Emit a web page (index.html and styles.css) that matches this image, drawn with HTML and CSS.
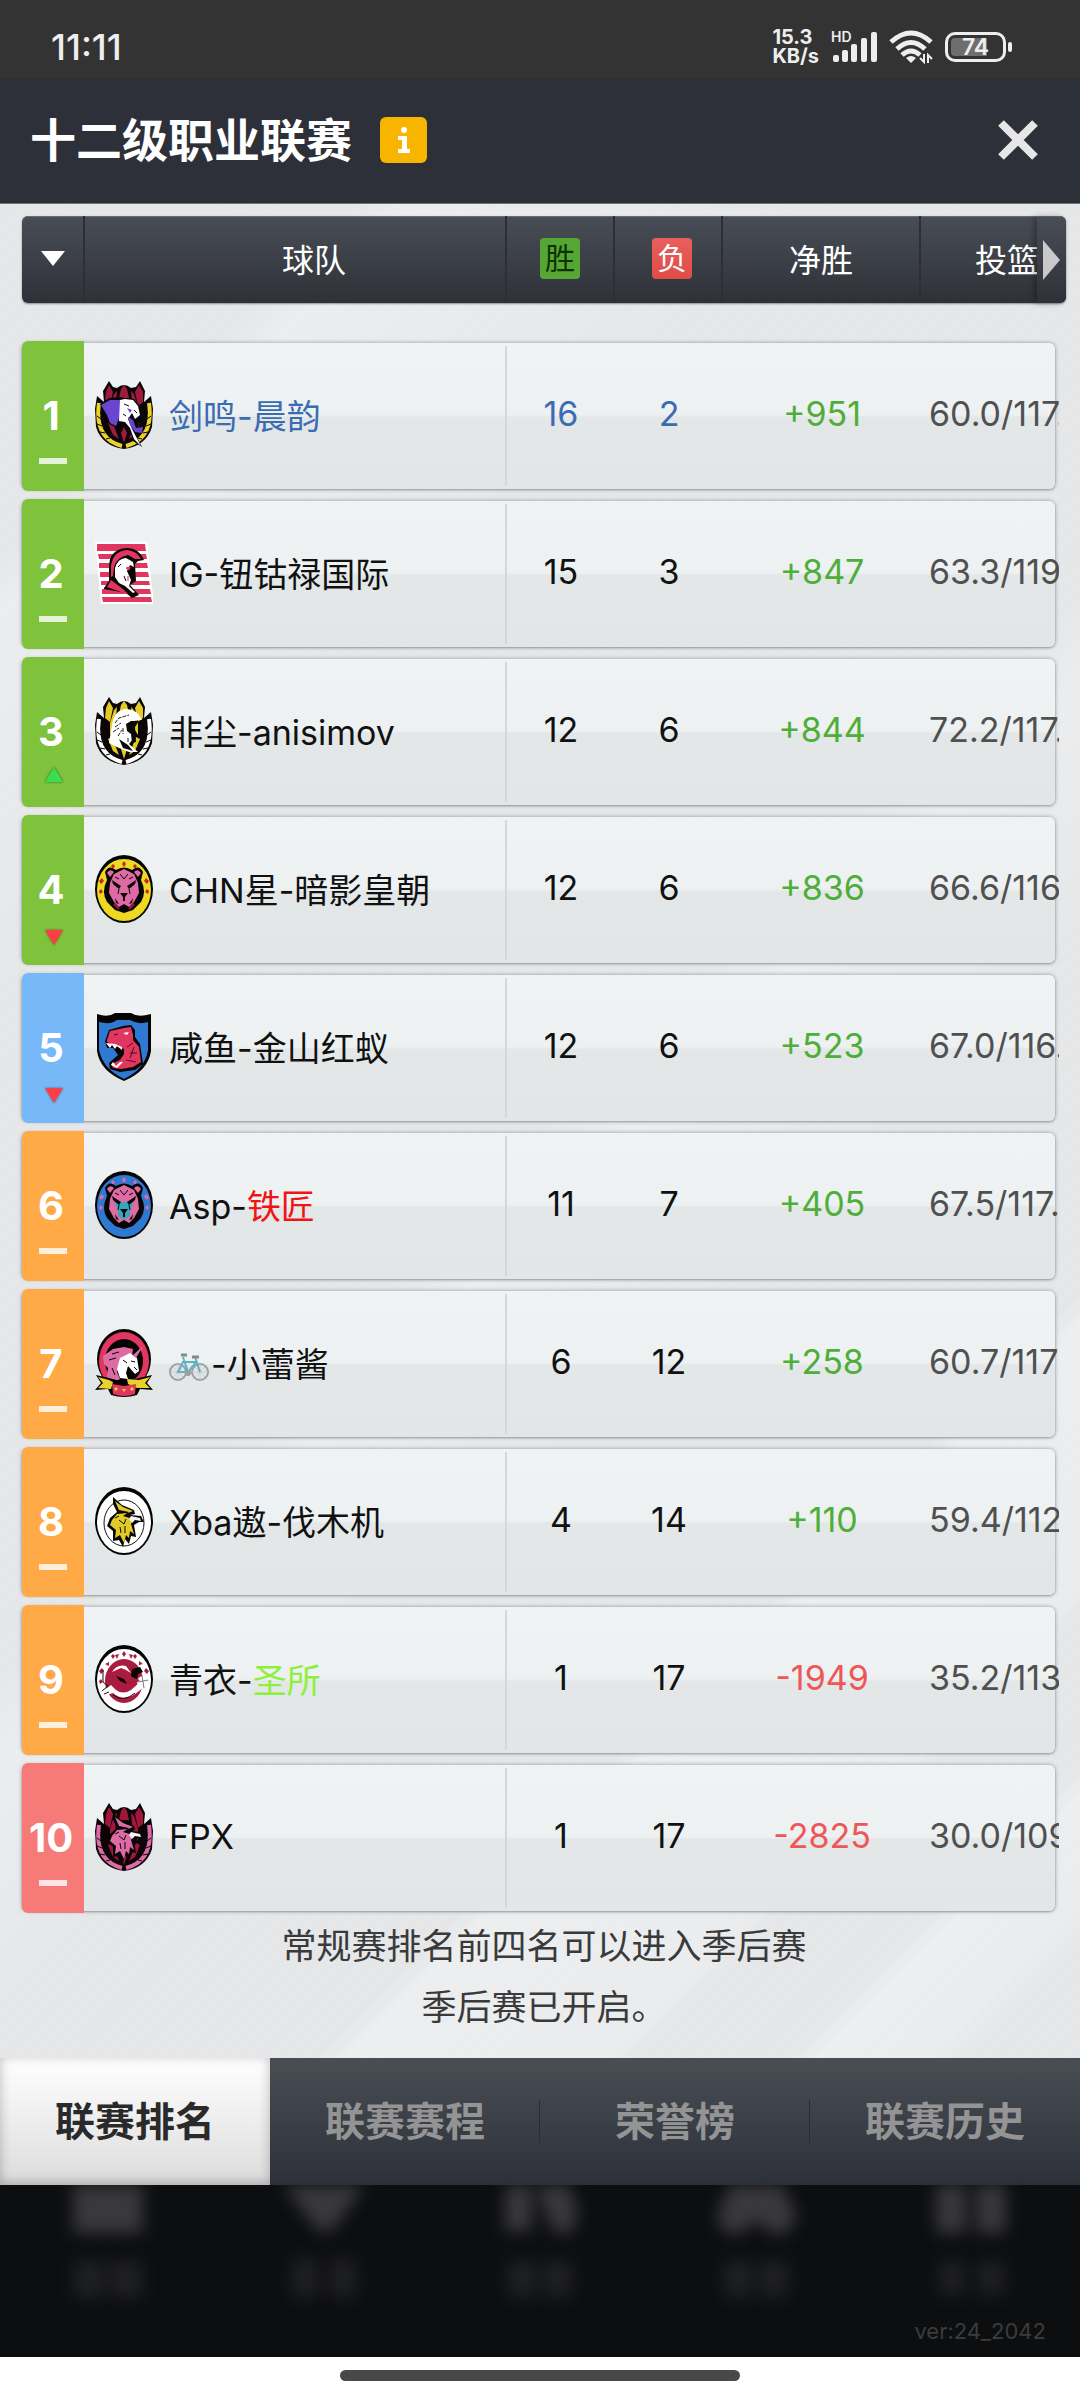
FILE: index.html
```html
<!DOCTYPE html>
<html lang="zh-CN">
<head>
  <meta charset="UTF-8">
  <meta name="viewport" content="width=device-width, initial-scale=1">
  <title>十二级职业联赛</title>
  <link rel="stylesheet" href="styles.css">
</head>
<body>

<!-- shared logo parts -->
<svg class="defs" width="0" height="0" aria-hidden="true">
  <symbol id="crest" viewBox="0 0 58 68">
    <path d="M14 0 18 6 22 7Q29 1 36 7L41 6 45 0 50 10 49 21 56 15 58 28 57 46Q51 65 29 68 7 65 1 46L0 28 2 15 9 21 8 10Z" fill="#0b0508"/>
    <path d="M14 4 18 11 15 25 10 21 11 11ZM44 4 48 11 48 21 43 25 40 11ZM26 8 29 4 32 8 34 17 24 17ZM19 13 22 10 20 30 15 38 15 26ZM39 13 36 10 38 30 43 38 43 26Z" fill="var(--wing)"/>
    <path d="M17 40 24 58 18 54 13 42ZM41 40 34 58 40 54 45 42ZM26 52 29 62 32 52 29 46Z" fill="var(--wing)"/>
    <path d="M4 22Q-1 58 27 65M54 22Q59 58 31 65" fill="none" stroke="var(--leaf)" stroke-width="4"/>
    <path d="M6 30Q5 53 25 61M52 30Q53 53 33 61" fill="none" stroke="#0b0508" stroke-width="1" stroke-dasharray="3 2"/>
    <path d="M2 35 6 38M2 43 7 45M5 51 10 52M11 58 15 57M56 35 52 38M56 43 51 45M53 51 48 52M47 58 43 57" stroke="#0b0508" stroke-width="1"/>
  </symbol>
  <symbol id="disc" viewBox="0 0 58 68">
    <ellipse cx="29" cy="34" rx="29" ry="34" fill="#050505"/>
    <ellipse cx="29" cy="35" rx="27" ry="31" fill="var(--ring)"/>
    <g fill="var(--star)">
      <path d="M29 6 31 9 29 12 27 9ZM18 9 20 11 18 14 16 11ZM40 9 42 11 40 14 38 11Z"/>
      <path d="M7 23 9 26 6 29 4 26ZM51 23 54 26 52 29 49 26ZM6 34 8 37 5 39 4 36ZM52 34 54 36 53 39 50 37Z"/>
    </g>
  </symbol>
  <symbol id="bear" viewBox="0 0 58 68">
    <path d="M10 17Q14 9 21 15 29 10 37 15 44 9 48 17L46 25Q52 37 46 47L38 55 29 58 20 55 12 47Q6 37 12 25Z" fill="#090507"/>
    <path d="M12 18Q15 13 19 17L15 22ZM46 18Q43 13 39 17L43 22Z" fill="var(--fur)"/>
    <path d="M19 19 29 14 39 19 43 28 44 38 39 47 34 52 29 49 24 52 19 47 14 38 15 28Z" fill="var(--fur)"/>
    <path d="M19 28 26 31H32L39 28 37 36 35 38 35 45 29 49 23 45 23 38 21 36Z" fill="var(--face)"/>
    <path d="M17 25 26 31 24 34 18 29ZM41 25 32 31 34 34 40 29ZM25 38H33L30 42V46H28V42ZM20 43 24 49 21 48ZM38 43 34 49 37 48Z" fill="#090507"/>
    <path d="M25 19 29 24 33 19M20 22 24 24M38 22 34 24M24 34 23 39M34 34 35 39" fill="none" stroke="#090507" stroke-width="1"/>
  </symbol>
  <symbol id="griffin" viewBox="0 0 58 68">
    <path d="M18 10 27 18 39 23 40 27 35 28 46 29 49 35 44 35 39 38 41 50 36 49 34 57 30 52 28 60 24 53 18 54 18 44 12 39 15 31 22 25 18 17Z" fill="#080607"/>
    <path d="M20 14 28 20 38 24 33 26 22 27 17 33 15 38 21 43 20 51 25 48 29 56 31 48 34 51 35 44 39 47 36 37 38 32 28 29 34 25 24 23Z" fill="var(--fur)"/>
    <path d="M36 29 45 31 46 34 40 33 37 36 34 32Z" fill="#f2f2f2"/>
    <path d="M24 33 29 37 31 32M25 40 26 46M30 39V46M20 31 24 29" fill="none" stroke="#080607" stroke-width="1"/>
  </symbol>
</svg>

<div class="status-bar">
  <span class="clock">11:11</span>
  <div class="status-icons">
    <div class="net-speed"><span>15.3</span><span>KB/s</span></div>
    <div class="signal">
      <span class="hd">HD</span>
      <svg width="46" height="30" viewBox="0 0 46 30" fill="#eee">
        <rect x="2" y="23" width="6" height="7" rx="2"/>
        <rect x="11" y="18" width="6" height="12" rx="2"/>
        <rect x="20" y="12" width="6" height="18" rx="2"/>
        <rect x="30" y="6" width="6" height="24" rx="2"/>
        <rect x="40" y="0" width="6" height="30" rx="2"/>
      </svg>
    </div>
    <svg width="44" height="34" viewBox="0 0 44 34" fill="none" stroke="#eee" stroke-width="5">
      <path d="M2 12Q22-6 42 12M8 19Q22 6 36 19"/>
      <path d="M13 25Q22 17 31 25"/>
      <path d="M17 28Q22 24 27 28L22 33Z" fill="#eee" stroke="none"/>
      <path d="M35 24V32L31 28M39 33V25L43 29" stroke-width="2"/>
    </svg>
    <div class="battery">74</div>
  </div>
</div>

<header class="title-bar">
  <h1>十二级职业联赛</h1>
  <button class="info-btn" type="button" aria-label="说明">
    <svg width="16" height="28" viewBox="0 0 16 28" fill="#fff">
      <circle cx="8" cy="4" r="3"/>
      <path d="M2 10H11V23H14V27H2V23H6V14H2Z"/>
    </svg>
  </button>
  <button class="close-btn" type="button" aria-label="关闭">
    <svg width="40" height="40" viewBox="0 0 40 40" stroke="#e6e6e6" stroke-width="8"><path d="M3 3 37 37M37 3 3 37"/></svg>
  </button>
</header>

<main>
  <table class="standings">
    <thead>
      <tr>
        <th><button class="sort-btn" type="button" aria-label="排序"></button></th>
        <th class="team-head">球队</th>
        <th><span class="tag tag-win">胜</span></th>
        <th class="loss-head"><span class="tag tag-loss">负</span></th>
        <th>净胜</th>
        <th class="shot-head">投篮<button class="more-btn" type="button" aria-label="更多"></button></th>
      </tr>
    </thead>
    <tbody>
      <tr class="mine">
        <td class="rank green">1<i class="same"></i></td>
        <td class="team">
          <svg class="logo elephant" viewBox="0 0 58 68">
            <use href="#crest"/>
            <path d="M5 23 14 17 25 16 30 17 39 18 44 24 47 33 45 40 43 46 46 54 41 54 47 66 38 60 35 48 29 42 22 47 14 43 10 34Z" fill="#09070a"/>
            <path d="M6 24 15 19 26 19 25 35 21 45 15 42 12 34Z" fill="#6a45cf"/>
            <path d="M25 19 30 18 38 19 43 25 45 34 40 38 37 32 33 38 37 48 46 65 39 58 35 47 30 41 24 40Z" fill="#fff"/>
            <path d="M33 36 38 39 41 47 48 46 47 52 40 51 35 44ZM32 27 37 29 35 32Z" fill="#6a45cf"/>
            <path d="M29 23 34 25M39 29 42 32M28 33 31 35" stroke="#09070a" stroke-width="1"/>
          </svg>
          <span>剑鸣-晨韵</span>
        </td>
        <td>16</td>
        <td>2</td>
        <td class="plus">+951</td>
        <td class="shot">60.0/117.</td>
      </tr>
      <tr>
        <td class="rank green">2<i class="same"></i></td>
        <td class="team">
          <svg class="logo" viewBox="0 0 58 68">
            <path d="M0 3H52L59 65H6Z" fill="#fff"/>
            <path d="M2 5H50L51 12H2ZM3 15H51L52 20H4ZM4 24H52L53 29H4ZM5 33H53L54 38H5ZM6 42H54L55 46H6ZM7 50H55L56 55H7ZM7 58H56L57 63H8Z" fill="#e0365f"/>
            <path d="M9 49 14 42V28Q14 10 32 9 44 9 49 21L43 22 40 25 41 42 35 46 44 56 37 59 31 54 9 50Z" fill="#0a0506"/>
            <path d="M12 48 16 41 28 50 34 56 23 52ZM16 38V27Q18 12 32 11 42 12 46 20L40 20 33 16Q22 18 19 28L18 37Z" fill="#e0365f"/>
            <path d="M20 38V29Q23 19 31 19L38 23 39 28 35 26 32 32 36 41 34 47 40 53 38 54 30 47 24 44Z" fill="#fff"/>
            <path d="M31 29 35 28 34 31ZM33 37V42" stroke="#e0365f" fill="#e0365f"/>
            <path d="M23 28 26 25M29 37 31 42" stroke="#0a0506" stroke-width="1"/>
          </svg>
          <span>IG-钮钴禄国际</span>
        </td>
        <td>15</td>
        <td>3</td>
        <td class="plus">+847</td>
        <td class="shot">63.3/119.</td>
      </tr>
      <tr>
        <td class="rank green">3<i class="up"></i></td>
        <td class="team">
          <svg class="logo spartan" viewBox="0 0 58 68">
            <use href="#crest"/>
            <path d="M14 46 17 28Q19 13 31 12 42 12 47 23L40 23 38 31 38 42 34 47 43 55 34 55 24 51Z" fill="#fff"/>
            <path d="M36 24 44 24 40 30 41 45 37 46 36 37 32 34 31 27ZM24 42 33 48 38 54 28 51Z" fill="#090907"/>
            <path d="M20 26 24 21 34 18M20 30 26 26M18 35 24 31M23 39 27 33M28 31V37M33 41V45" fill="none" stroke="#222" stroke-width="1" stroke-dasharray="4 1"/>
          </svg>
          <span>非尘-anisimov</span>
        </td>
        <td>12</td>
        <td>6</td>
        <td class="plus">+844</td>
        <td class="shot">72.2/117.</td>
      </tr>
      <tr>
        <td class="rank green">4<i class="down"></i></td>
        <td class="team">
          <svg class="logo bear-gold" viewBox="0 0 58 68">
            <use href="#disc"/><use href="#bear"/>
            <path d="M19 49 24 54M39 49 34 54" stroke="#a3163b" stroke-width="2"/>
          </svg>
          <span>CHN星-暗影皇朝</span>
        </td>
        <td>12</td>
        <td>6</td>
        <td class="plus">+836</td>
        <td class="shot">66.6/116.</td>
      </tr>
      <tr>
        <td class="rank blue">5<i class="down"></i></td>
        <td class="team">
          <svg class="logo" viewBox="0 0 58 68">
            <path d="M2 1Q13 5 20 0H36Q43 5 56 1V38Q53 58 29 68 5 58 2 38Z" fill="#040404"/>
            <path d="M4 9Q16 12 22 7H35Q43 12 53 9V37Q50 56 29 66 8 56 4 37Z" fill="#2f79d2"/>
            <path d="M10 28 14 17 28 13 36 12 40 17V24L45 31 48 51 40 57 25 59 15 56 14 50 23 42 18 35 12 35Z" fill="#070607"/>
            <path d="M12 27 15 18 29 15 36 14 38 22 38 27 44 34 46 49 38 54 26 56 18 55 16 51 25 47 29 41 29 36 20 33 12 29Z" fill="#e0365f"/>
            <path d="M11 30 15 35 17 32 20 36 22 33 27 37 27 34 20 31ZM16 52 22 55 28 49 25 49 21 53 18 49ZM28 20 34 19 32 22Z" fill="#fff"/>
            <path d="M32 34 38 30M35 40 42 40M31 47 41 49M39 34 35 45M19 22 23 21" stroke="#4b0c1d" stroke-width="1"/>
          </svg>
          <span>咸鱼-金山红蚁</span>
        </td>
        <td>12</td>
        <td>6</td>
        <td class="plus">+523</td>
        <td class="shot">67.0/116.</td>
      </tr>
      <tr>
        <td class="rank orange">6<i class="same"></i></td>
        <td class="team">
          <svg class="logo bear-blue" viewBox="0 0 58 68">
            <use href="#disc"/><use href="#bear"/>
          </svg>
          <span>Asp-<b class="red">铁匠</b></span>
        </td>
        <td>11</td>
        <td>7</td>
        <td class="plus">+405</td>
        <td class="shot">67.5/117.</td>
      </tr>
      <tr>
        <td class="rank orange">7<i class="same"></i></td>
        <td class="team">
          <svg class="logo" viewBox="0 0 58 68">
            <ellipse cx="29" cy="30" rx="27" ry="30" fill="#050304"/>
            <ellipse cx="29" cy="32" rx="25" ry="29" fill="#e0365f"/>
            <ellipse cx="29" cy="32" rx="19" ry="22" fill="#050304"/>
            <path d="M8 27 18 20 29 18 38 20 37 27 25 32 22 43 25 50 18 54 12 48 13 39 9 35Z" fill="#df6ba5"/>
            <path d="M25 29 35 24 42 29 44 42 40 45 33 37 31 44 33 50 25 49 22 40Z" fill="#fff"/>
            <path d="M38 26 48 17 41 29Z" fill="#df6ba5"/>
            <path d="M28 31 32 34M36 32 40 33M17 25 24 23M14 31 21 29M17 39 20 46M39 38 42 41" stroke="#050304" stroke-width="1"/>
            <path d="M1 46 14 49 29 53 44 49 57 46 52 54 58 61 45 60 42 66Q29 70 16 66L13 60 0 61 6 54Z" fill="#050304"/>
            <path d="M3 48 14 51 18 53 16 60 3 59 8 54ZM55 48 44 51 32 50 33 55 42 59 55 59 50 54Z" fill="#ead22c"/>
            <path d="M17 55 29 57 41 55 40 65Q29 69 18 65Z" fill="#e0365f"/>
            <path d="M21 58 23 60 21 62 19 60ZM27 60H31L29 63ZM37 58 39 60 37 62 35 60Z" fill="#ead22c"/>
          </svg>
          <span><svg class="bike" viewBox="0 0 40 30" role="img" aria-label="自行车">
            <g fill="none">
              <circle cx="9" cy="20" r="8" stroke="#9b9fa1" stroke-width="2"/>
              <circle cx="31" cy="20" r="8" stroke="#9b9fa1" stroke-width="2"/>
              <path d="M9 12V28M1 20H17M4 15 14 25M14 15 4 25M31 12V28M23 20H39M26 15 36 25M36 15 26 25" stroke="#c8cccd" stroke-width="1"/>
              <path d="M9 20 14 10H27L19 20ZM31 20 26 5M19 20 14 5" stroke="#5cb3c1" stroke-width="2"/>
              <path d="M12 3H18M23 5H30" stroke="#85898b" stroke-width="3"/>
              <circle cx="19" cy="21" r="3" fill="#9b9fa1"/>
            </g>
          </svg>-小蕾酱</span>
        </td>
        <td>6</td>
        <td>12</td>
        <td class="plus">+258</td>
        <td class="shot">60.7/117</td>
      </tr>
      <tr>
        <td class="rank orange">8<i class="same"></i></td>
        <td class="team">
          <svg class="logo griffin-gold" viewBox="0 0 58 68">
            <use href="#disc"/>
            <ellipse cx="29" cy="36" rx="20" ry="23" fill="none" stroke="#111" stroke-width="1"/>
            <use href="#griffin"/>
          </svg>
          <span>Xba遨-伐木机</span>
        </td>
        <td>4</td>
        <td>14</td>
        <td class="plus">+110</td>
        <td class="shot">59.4/112.</td>
      </tr>
      <tr>
        <td class="rank orange">9<i class="same"></i></td>
        <td class="team">
          <svg class="logo ring-white" viewBox="0 0 58 68">
            <use href="#disc"/>
            <path d="M10 19 14 17 14 21ZM20 10 24 9 22 14ZM34 9 38 10 36 14ZM44 16 48 19 44 20Z" fill="#a91c40"/>
            <ellipse cx="29" cy="36" rx="19" ry="22" fill="#a91c40"/>
            <path d="M8 46 16 40 21 45Q28 50 36 45L44 38 48 43 40 49Q28 57 18 48L8 51Z" fill="#fff"/>
            <path d="M8 25V37L13 41 7 46M14 47 9 49M18 50Q28 58 40 48" fill="none" stroke="#111" stroke-width="1"/>
            <path d="M17 27Q22 19 31 21L36 28 31 25 26 23Z" fill="#fff"/>
            <path d="M37 24 45 22 48 27 43 29 42 35 36 31ZM21 31 29 34 32 39 25 36Z" fill="#060405"/>
            <circle cx="48" cy="37" r="6" fill="#fff"/>
            <path d="M43 37 53 35M47 31 49 43" stroke="#777" stroke-width="1"/>
            <path d="M36 32 45 35 41 38 36 36Z" fill="#a91c40"/>
          </svg>
          <span>青衣-<b class="lime">圣所</b></span>
        </td>
        <td>1</td>
        <td>17</td>
        <td class="minus">-1949</td>
        <td class="shot">35.2/113</td>
      </tr>
      <tr>
        <td class="rank pink">10<i class="same"></i></td>
        <td class="team">
          <svg class="logo griffin-rose" viewBox="0 0 58 68">
            <use href="#crest"/><use href="#griffin"/>
          </svg>
          <span>FPX</span>
        </td>
        <td>1</td>
        <td>17</td>
        <td class="minus">-2825</td>
        <td class="shot">30.0/109</td>
      </tr>
    </tbody>
  </table>

  <div class="notes">
    <p>常规赛排名前四名可以进入季后赛</p>
    <p>季后赛已开启。</p>
  </div>
</main>

<nav class="tabs">
  <button class="tab active" type="button">联赛排名</button>
  <button class="tab" type="button">联赛赛程</button>
  <button class="tab" type="button">荣誉榜</button>
  <button class="tab" type="button">联赛历史</button>
</nav>

<!-- dimmed menu of the screen below -->
<footer class="under">
  <div class="under-menu" aria-hidden="true">
    <svg viewBox="0 0 100 130"><path d="M15-10H85V48H15Z"/><path class="dim" d="M16 76H46V112H16ZM52 76H84V112H52Z"/></svg>
    <svg viewBox="0 0 100 130"><path d="M12-10H88V4L58 46H44L12 4Z"/><path class="dim" d="M18 74H44V112H18ZM56 74H82V112H56Z"/></svg>
    <svg viewBox="0 0 100 130"><path d="M16-10H42V46H14ZM46-10H76L88 26 82 48H64L52 20Z"/><path class="dim" d="M18 76H46V112H18ZM54 76H82V112H54Z"/></svg>
    <svg viewBox="0 0 100 130"><path d="M28-10H72L90 28Q88 50 68 50L50 36 32 50Q10 48 12 28Z"/><path class="dim" d="M18 76H46V112H18ZM54 76H82V112H54Z"/></svg>
    <svg viewBox="0 0 100 130"><path d="M14-10H44V48H14ZM54-10H84V48H54Z"/><path class="dim" d="M18 76H42V110H18ZM56 76H82V110H56Z"/></svg>
  </div>
  <p class="version">ver:24_2042</p>
</footer>
<div class="home-bar"><span></span></div>

</body>
</html>
```
FILE: styles.css
```css
* {
  box-sizing: border-box;
}
body {
  margin: 0;
  background: #fff;
  font-family: Inter, "Noto Sans CJK SC", sans-serif;
  font-size: 34px;
  color: #111;
}
button {
  border: none;
  padding: 0;
  background: none;
  font-family: inherit;
  cursor: pointer;
}
svg {
  display: block;
}
.defs {
  position: absolute;
}

/* status bar */
.status-bar {
  height: 78px;
  padding: 16px 74px 0 51px;
  display: flex;
  justify-content: space-between;
  align-items: center;
  background: #333;
  color: #eee;
}
.clock {
  font-size: 36px;
  font-weight: 500;
}
.status-icons {
  display: flex;
  align-items: center;
  gap: 12px;
}
.net-speed {
  display: flex;
  flex-direction: column;
  font-size: 20px;
  line-height: 19px;
  font-weight: 700;
}
.signal {
  position: relative;
}
.hd {
  position: absolute;
  left: 0;
  top: -2px;
  font-size: 14px;
  line-height: 14px;
  font-weight: 600;
}
.battery {
  position: relative;
  width: 61px;
  height: 30px;
  border: 3px solid #eee;
  border-radius: 10px;
  background: linear-gradient(90deg, #6e6e6e 74%, #333 74%) content-box;
  padding: 3px;
  font-size: 23px;
  line-height: 18px;
  font-weight: 600;
  text-align: center;
}
.battery::after {
  content: "";
  position: absolute;
  right: -9px;
  top: 7px;
  width: 4px;
  height: 10px;
  border-radius: 2px;
  background: #eee;
}

/* title */
.title-bar {
  height: 126px;
  padding: 0 42px 2px 30px;
  display: flex;
  align-items: center;
  background: #2d3038;
  border-bottom: 1px solid #6c7078;
}
.title-bar h1 {
  margin: 0;
  font-size: 46px;
  line-height: 60px;
  font-weight: 700;
  color: #fff;
}
.info-btn {
  width: 47px;
  height: 46px;
  margin-left: 28px;
  display: grid;
  place-items: center;
  border-radius: 6px;
  background: #f8b500;
}
.close-btn {
  margin-left: auto;
}

/* standings */
main {
  padding: 12px 14px 20px 22px;
  background:
    linear-gradient(135deg, transparent 12%, rgba(255,255,255,.25) 14%, transparent 28%, transparent 50%, rgba(255,255,255,.25) 53%, transparent 62%, transparent 74%, rgba(255,255,255,.3) 75%, rgba(255,255,255,.2) 84%, transparent 85%, transparent 90%, rgba(255,255,255,.3) 91%, rgba(255,255,255,.2) 95%, transparent 96%),
    repeating-linear-gradient(135deg, #e5e7e9 0, #e5e7e9 11px, #e2e4e6 12px, #e5e7e9 13px);
}
.standings,
.standings thead,
.standings tbody {
  display: block;
}
.standings tr {
  display: grid;
  grid-template-columns: 62px minmax(0, 1fr) 108px 108px 198px 134px;
}
.standings thead tr {
  grid-template-columns: 63px minmax(0, 1fr) 108px 108px 198px 145px;
  height: 87px;
  margin-bottom: 40px;
  border-radius: 6px;
  background: linear-gradient(#494d55, #2e3138);
  box-shadow: inset 0 1px 0 #686e75, 0 1px 2px rgba(0,0,0,.4);
}
.standings th {
  display: flex;
  align-items: center;
  justify-content: center;
  padding: 0 0 3px;
  font-size: 32px;
  font-weight: 400;
  color: #fff;
  border-right: 2px solid #2c2f35;
}
.standings .team-head {
  padding-left: 38px;
}
.standings .loss-head {
  padding-left: 8px;
}
.standings .shot-head {
  position: relative;
  justify-content: flex-start;
  padding-left: 54px;
  border-right: none;
}
.sort-btn {
  border: 12px solid transparent;
  border-top: 15px solid #fff;
  border-bottom: none;
}
.more-btn {
  position: absolute;
  right: 0;
  top: 1px;
  bottom: 0;
  width: 29px;
  border-radius: 0 6px 6px 0;
  background: linear-gradient(#494d55, #2e3138);
  box-shadow: -3px 0 6px rgba(0,0,0,.3);
}
.more-btn::before {
  content: "";
  display: block;
  margin-left: 6px;
  border: 20px solid transparent;
  border-left: 17px solid #c9c9c9;
  border-right: none;
}
.tag {
  width: 40px;
  height: 41px;
  border-radius: 4px;
  font-size: 30px;
  line-height: 41px;
  text-align: center;
}
.tag-win {
  background: #54a735;
  color: #0e3300;
}
.tag-loss {
  background: linear-gradient(#e95f5b, #de4d49);
}

.standings tbody {
  padding-right: 11px;
}
.standings tbody tr {
  height: 146px;
  margin-bottom: 12px;
  border-radius: 6px;
  background: linear-gradient(#eff3f4, #edf1f2 49%, #e3e7e8 51%, #e2e6e7);
  box-shadow: 0 0 4px rgba(0,0,0,.35), 0 1px 2px rgba(0,0,0,.2);
}
.standings tbody tr:last-child {
  margin-bottom: 5px;
}
.standings td {
  display: flex;
  align-items: center;
  justify-content: center;
  padding: 0 0 6px;
}
.standings .rank {
  flex-direction: column;
  justify-content: flex-start;
  margin: -2px 0;
  padding: 50px 4px 0 0;
  border-radius: 6px 0 0 6px;
  font-size: 40px;
  line-height: 50px;
  font-weight: 700;
  color: #fff;
}
.green {
  background: #7fc23b;
}
.blue {
  background: #76b8f8;
}
.orange {
  background: #ffa947;
}
.pink {
  background: #f67b78;
}
.same {
  width: 28px;
  height: 6px;
  margin: 17px 0 0 3px;
  background: rgba(255,255,255,.8);
}
.up,
.down {
  margin: 10px 0 0 5px;
  border: 9px solid transparent;
  border-bottom: 15px solid #3edc50;
  border-top: none;
  filter: drop-shadow(0 0 1px rgba(0,60,0,.7));
}
.down {
  margin-top: 15px;
  border-top: 15px solid #fc3f45;
  border-bottom: none;
  filter: drop-shadow(0 0 1px rgba(60,0,0,.5));
}
.standings .team {
  justify-content: flex-start;
  gap: 16px;
  padding: 0 0 3px 11px;
  margin: 3px 0;
  border-right: 2px solid #d5d8da;
  white-space: nowrap;
}
.team b {
  font-weight: 400;
}
.red {
  color: #f01414;
}
.lime {
  color: #8df03c;
}
.mine {
  color: #3b6cb2;
}
.plus {
  color: #4fae39;
}
.minus {
  color: #ee5757;
}
.standings .shot {
  justify-content: flex-start;
  margin-right: -4px;
  padding-left: 8px;
  overflow: hidden;
  color: #505050;
}
.logo {
  flex: none;
  width: 58px;
  height: 68px;
}
.bike {
  display: inline-block;
  width: 40px;
  height: 30px;
  margin-right: 2px;
  vertical-align: -5px;
}
.elephant {
  --wing: #9d1b3f;
  --leaf: #ead22c;
}
.spartan {
  --wing: #e3cb27;
  --leaf: #fff;
}
.griffin-rose {
  --wing: #a3163b;
  --leaf: #df6ba5;
  --fur: #df6ba5;
}
.griffin-gold {
  --ring: #fff;
  --star: #fff;
  --fur: #e3cb27;
}
.bear-gold {
  --ring: #eed922;
  --star: #c2272f;
  --fur: #df6ba5;
  --face: #df6ba5;
}
.bear-blue {
  --ring: #2f79d2;
  --star: #df6ba5;
  --fur: #df6ba5;
  --face: #36a6bd;
}
.ring-white {
  --ring: #fff;
  --star: #a91c40;
}

.notes {
  margin-top: 4px;
  text-align: center;
  font-size: 35px;
  line-height: 61px;
  color: #3a3a3a;
}
.notes p {
  margin: 0;
}

/* tabs */
.tabs {
  display: flex;
  height: 127px;
  background: linear-gradient(#494e55, #2d3038);
}
.tab {
  flex: 1;
  padding-bottom: 6px;
  font-size: 40px;
  font-weight: 700;
  color: #949494;
  background: linear-gradient(#2a2d33, #2a2d33) right center / 1px 43px no-repeat;
}
.tab:last-child {
  background: none;
}
.tab.active {
  color: #2a2a2a;
  background: linear-gradient(#fff, #dcdcdc);
  box-shadow: inset 0 -2px 12px rgba(0,0,0,.25);
}

.under {
  background: #0d0e10;
  overflow: hidden;
}
.under-menu {
  display: flex;
  justify-content: space-around;
  height: 130px;
}
.under-menu svg {
  width: 100px;
  height: 130px;
  fill: #39393d;
  filter: blur(8px);
}
.under-menu .dim {
  fill: #1f2022;
}
.version {
  margin: 0;
  padding: 0 34px 9px;
  font-size: 22px;
  line-height: 33px;
  text-align: right;
  color: #3c3c3c;
}
.home-bar {
  display: flex;
  justify-content: center;
  padding: 13px 0 18px;
  background: #fff;
}
.home-bar span {
  width: 37%;
  height: 11px;
  border-radius: 6px;
  background: #484848;
}
```
